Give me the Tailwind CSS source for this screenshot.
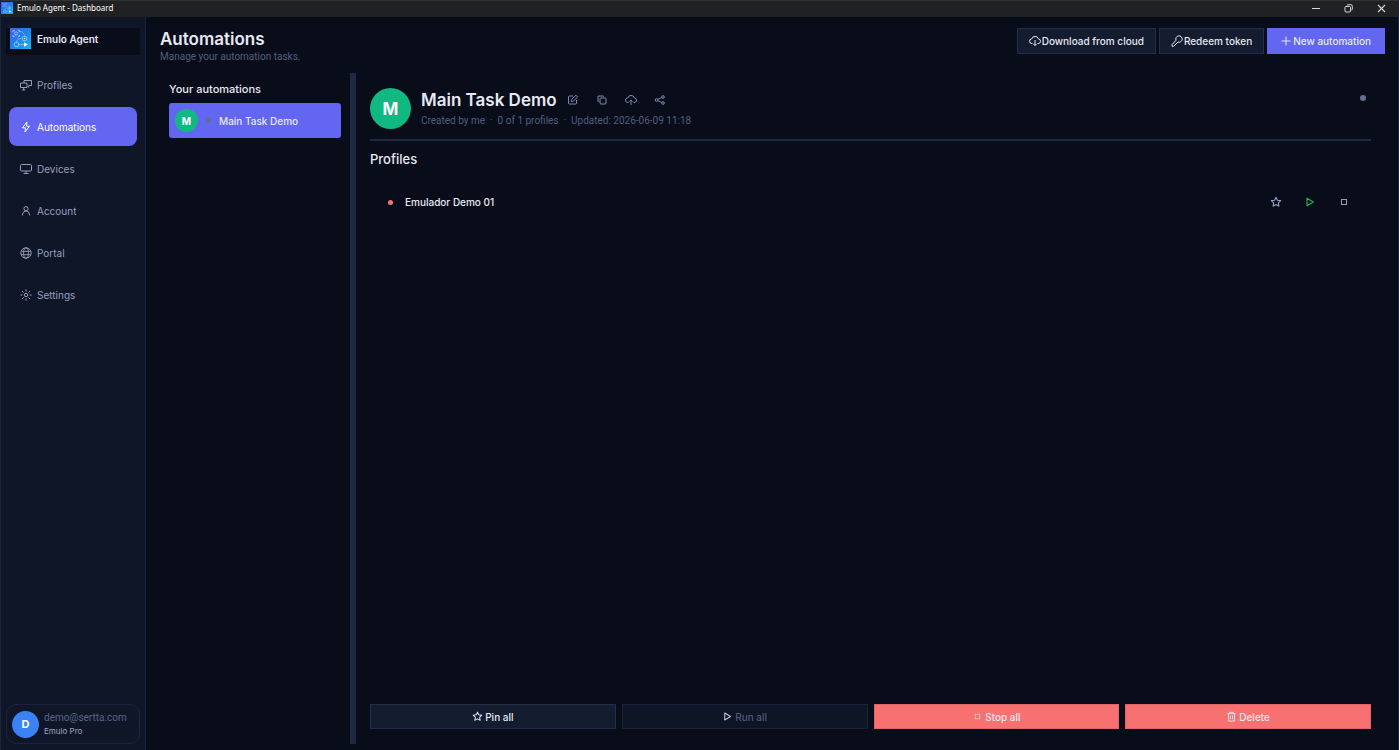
<!DOCTYPE html>
<html lang="en">
<head>
  <meta charset="UTF-8">
  <meta name="viewport" content="width=device-width, initial-scale=1.0">
  <title>Emulo Agent - Dashboard</title>
  <script src="https://cdn.jsdelivr.net/npm/@tailwindcss/browser@4"></script>
</head>
<body class="bg-[#090d1a] text-[#e6e9f2] font-['Inter',sans-serif] text-[10px] leading-4">
  <!-- shared icons -->
  <svg class="absolute size-0" aria-hidden="true">
    <defs>
      <linearGradient id="logoFill" x1="0" y1="0" x2="1" y2="1">
        <stop offset="0" stop-color="#4a5cf0" />
        <stop offset="0.5" stop-color="#2183ea" />
        <stop offset="1" stop-color="#0cc0ee" />
      </linearGradient>
    </defs>
    <symbol id="logo" viewBox="0 0 21 21">
      <rect width="21" height="21" fill="url(#logoFill)" />
      <g fill="none" stroke="#a5d2ff" stroke-width="0.8">
        <path d="M3 4V2.500h1.500M8 2.500h1.500V4M9.500 7v1.500H8M4.500 8.500H3V7" />
        <circle cx="6.200" cy="5.500" r="1.600" />
        <rect x="12.500" y="8.500" width="4" height="4" rx="1" />
        <rect x="4.500" y="14.500" width="4" height="4" rx="1" />
        <path d="M9.500 3.500q4 0 5 4M6.500 13.500q1-3 5.500-3M9 16.500h5" stroke-dasharray="1.500 0.600" />
      </g>
      <circle cx="14.500" cy="10.500" r="0.700" fill="#fff" />
      <path d="M14 14.300l4 2.200-4 2.200z" fill="#fff" />
    </symbol>
    <symbol id="star" viewBox="0 0 12 12"><path d="M6 1.200l1.400 3 3.300.4-2.400 2.300.6 3.300L6 8.600l-2.900 1.600.6-3.300L1.300 4.600l3.300-.4z" fill="none" stroke="currentColor" stroke-width="1.100" stroke-linejoin="round" /></symbol>
    <symbol id="play" viewBox="0 0 12 12"><path d="M3 2.200v7.600L9.300 6z" fill="none" stroke="currentColor" stroke-width="1.100" stroke-linejoin="round" /></symbol>
    <symbol id="stop" viewBox="0 0 12 12"><rect x="3.500" y="3.500" width="5" height="5" fill="none" stroke="currentColor" /></symbol>
  </svg>

  <div class="flex flex-col min-h-screen border-x border-[#1c2438]">
    <header class="flex items-center justify-between h-[17px] pb-[2px] bg-[#1f2122] border-t border-[#303334] font-['Noto_Sans',sans-serif] text-[8px] text-white">
      <div class="flex items-center gap-1">
        <svg class="size-3"><use href="#logo" /></svg>
        <span>Emulo Agent - Dashboard</span>
      </div>
      <div class="flex items-center gap-[22px] pr-[11px] text-[#d8d8d8]">
        <button aria-label="Minimize"><svg class="size-[11px]" viewBox="0 0 11 11"><path d="M2 5.500h8" stroke="currentColor" /></svg></button>
        <button aria-label="Restore"><svg class="size-[11px]" viewBox="0 0 11 11" fill="none" stroke="currentColor"><rect x="2" y="3.500" width="5.500" height="5.500" rx="1" /><path d="M4 2.500q0-.8.800-.8h3q1.500 0 1.500 1.500v3q0 .8-.800.8" /></svg></button>
        <button aria-label="Close"><svg class="size-[11px]" viewBox="0 0 11 11"><path d="M2 2l7 7M9 2l-7 7" stroke="currentColor" stroke-width="1.100" /></svg></button>
      </div>
    </header>

    <div class="flex flex-1">
      <aside class="flex flex-col w-[145px] shrink-0 px-[5px] pt-[11px] pb-[6px] bg-[#0f1627] border-r border-[#192238]">
        <div class="flex items-start gap-[6px] h-[27px] pl-1 bg-[#090d1a] font-semibold">
          <svg class="size-[21px]"><use href="#logo" /></svg>
          <span class="leading-[22px]">Emulo Agent</span>
        </div>

        <nav class="flex flex-col gap-[3px] mt-[10px] px-[3px] text-[#94a0be]">
          <a href="#profiles" class="flex items-center gap-[5px] h-[39px] px-[11px] rounded-lg">
            <svg class="size-3" viewBox="0 0 12 12" fill="none" stroke="currentColor"><path d="M4 4V1.500h7.500v5H9M.500 4h6.500v4.500H.500zM3.700 8.500v2.500M2.200 11h3M8.700 6.500v2" /></svg>
            Profiles
          </a>
          <a href="#automations" class="flex items-center gap-[5px] h-[39px] px-[11px] rounded-lg bg-[#6366f1] text-white">
            <svg class="size-3" viewBox="0 0 12 12" fill="none" stroke="currentColor" stroke-linejoin="round"><path d="M7 1L2.500 6.800h3L5 11l4.500-5.800h-3z" /></svg>
            Automations
          </a>
          <a href="#devices" class="flex items-center gap-[5px] h-[39px] px-[11px] rounded-lg">
            <svg class="size-3" viewBox="0 0 12 12" fill="none" stroke="currentColor"><rect x=".5" y="1.500" width="11" height="6.500" rx="1" /><path d="M6 8v2.500M3.500 10.500h5" /></svg>
            Devices
          </a>
          <a href="#account" class="flex items-center gap-[5px] h-[39px] px-[11px] rounded-lg">
            <svg class="size-3" viewBox="0 0 12 12" fill="none" stroke="currentColor"><circle cx="6" cy="3.700" r="2.100" /><path d="M2.200 10.500q.3-4.300 3.800-4.600 3.500.3 3.800 4.600" /></svg>
            Account
          </a>
          <a href="#portal" class="flex items-center gap-[5px] h-[39px] px-[11px] rounded-lg">
            <svg class="size-3" viewBox="0 0 12 12" fill="none" stroke="currentColor" stroke-width=".9"><circle cx="6" cy="6" r="5.200" /><ellipse cx="6" cy="6" rx="2.400" ry="5.200" /><path d="M1.200 4.300h9.600M1.200 7.700h9.600" /></svg>
            Portal
          </a>
          <a href="#settings" class="flex items-center gap-[5px] h-[39px] px-[11px] rounded-lg">
            <svg class="size-3" viewBox="0 0 12 12" fill="none" stroke="currentColor"><circle cx="6" cy="6" r="1.700" /><path d="M6 .5v2M6 9.500v2M.500 6h2M9.500 6h2M2.100 2.100l1.400 1.400M8.500 8.500l1.400 1.400M9.900 2.100L8.500 3.500M3.500 8.500L2.100 9.900" /></svg>
            Settings
          </a>
        </nav>

        <div class="flex items-center gap-[5px] h-10 mt-auto pl-[5px] border border-[#1a243a] rounded-[10px]">
          <div class="flex items-center justify-center size-[27px] rounded-full bg-[#3b82f6] text-white text-[11px] font-bold">D</div>
          <div class="flex flex-col">
            <span class="font-['Roboto',sans-serif] leading-[14px] text-[#59658a]">demo@sertta.com</span>
            <span class="text-[8px] leading-[13px] text-[#9ba6c2]">Emulo Pro</span>
          </div>
        </div>
      </aside>

      <main class="flex flex-col flex-1 min-w-0 pt-[11px] pl-[14px] pr-[13px] pb-[6px]">
        <div class="flex justify-between">
          <div>
            <h1 class="text-[17px] leading-[22px] font-semibold">Automations</h1>
            <p class="-mt-px font-['Roboto',sans-serif] text-[#535d7e]">Manage your automation tasks.</p>
          </div>
          <div class="flex items-start gap-[3px] font-medium">
            <button class="flex items-center gap-px h-[26px] px-[11px] bg-[#141c2f] border border-[#232e4c]">
              <svg class="size-3" viewBox="0 0 12 12" fill="none" stroke="currentColor"><path d="M3.500 8.500H3a2.300 2.300 0 0 1-.3-4.600 3.500 3.500 0 0 1 6.700 0A2.300 2.300 0 0 1 9 8.500h-.5M6 5v5.500M4.300 8.900L6 10.600l1.700-1.700" /></svg>
              Download from cloud
            </button>
            <button class="flex items-center gap-px h-[26px] px-[11px] bg-[#141c2f] border border-[#232e4c]">
              <svg class="size-3" viewBox="0 0 12 12" fill="none" stroke="currentColor"><path d="M5 5.200a3.200 3.200 0 1 1 2 1.900L2.500 11.300H1V9.700z" /></svg>
              Redeem token
            </button>
            <button class="flex items-center gap-[2px] h-[26px] px-[14px] bg-[#6366f1]">
              <svg class="size-[10px]" viewBox="0 0 10 10" stroke="currentColor"><path d="M5 .5v9M.500 5h9" /></svg>
              New automation
            </button>
          </div>
        </div>

        <div class="flex flex-1 mt-2">
          <section class="w-[190px] shrink-0 pt-2 px-[9px]">
            <h2 class="text-[11px] font-medium">Your automations</h2>
            <button class="flex items-center w-full h-[35px] mt-[6px] pl-[6px] rounded-[3px] bg-[#6366f1] font-medium">
              <span class="flex items-center justify-center size-[23px] rounded-full bg-[#10b981] text-white text-[10px] font-bold">M</span>
              <span class="size-[5px] mx-2 rounded-full bg-[#64708b]"></span>
              Main Task Demo
            </button>
          </section>
          <div class="w-[6px] shrink-0 bg-[#1f2944]"></div>

          <section class="flex flex-col flex-1 min-w-0 pt-[15px] pl-[14px] pr-[14px] pb-[15px]">
            <div class="flex gap-[10px] h-[53px] border-b-2 border-[#1f2944]">
              <div class="flex items-center justify-center size-[41px] rounded-full bg-[#10b981] text-white text-[17px] font-bold">M</div>
              <div class="flex-1">
                <div class="flex items-center h-[23px] text-[#7f8ab0]">
                  <h2 class="mr-[10px] text-[17px] font-semibold text-[#e6e9f2]">Main Task Demo</h2>
                  <div class="flex gap-[17px]">
                    <button aria-label="Edit"><svg class="size-3" viewBox="0 0 12 12" fill="none" stroke="currentColor"><path d="M6 2H2.500q-1 0-1 1v6q0 1 1 1h6q1 0 1-1V6M4.200 7.500l.4-2L9 1.200l1.700 1.700-4.500 4.300z" /></svg></button>
                    <button aria-label="Copy"><svg class="size-3" viewBox="0 0 12 12" fill="none" stroke="currentColor"><rect x="4" y="4" width="6" height="6" rx="1" /><path d="M2.700 7.500H2V2h5.500v.700" /></svg></button>
                    <button aria-label="Upload to cloud"><svg class="size-3" viewBox="0 0 12 12" fill="none" stroke="currentColor"><path d="M3.500 8.500H3a2.300 2.300 0 0 1-.3-4.600 3.500 3.500 0 0 1 6.700 0A2.300 2.300 0 0 1 9 8.500h-.5M6 11V6M4.300 7.600L6 5.900l1.700 1.700" /></svg></button>
                    <button aria-label="Share"><svg class="size-3" viewBox="0 0 12 12" fill="none" stroke="currentColor"><circle cx="2.500" cy="6" r="1.300" /><circle cx="9" cy="3" r="1.300" /><circle cx="9" cy="9" r="1.300" /><path d="M3.700 5.400l4.100-1.800M3.700 6.600l4.100 1.800" /></svg></button>
                  </div>
                </div>
                <p class="mt-[2px] font-['Roboto',sans-serif] text-[#535d7e]">Created by me &nbsp;·&nbsp; 0 of 1 profiles &nbsp;·&nbsp; Updated: 2026-06-09 11:18</p>
              </div>
              <span class="size-[6px] mt-[7px] mr-[5px] rounded-full bg-[#64708f]"></span>
            </div>

            <h3 class="mt-[10px] text-[13px] font-medium">Profiles</h3>
            <div class="flex items-center h-10 mt-[15px] pl-[18px] pr-[21px] font-medium">
              <span class="size-[5px] rounded-full bg-[#f87171]"></span>
              <span class="ml-[12px]">Emulador Demo 01</span>
              <div class="flex gap-[22px] ml-auto text-[#94a0be]">
                <button aria-label="Pin"><svg class="size-3"><use href="#star" /></svg></button>
                <button aria-label="Run" class="text-[#22b455]"><svg class="size-3"><use href="#play" /></svg></button>
                <button aria-label="Stop"><svg class="size-3"><use href="#stop" /></svg></button>
              </div>
            </div>

            <div class="grid grid-cols-4 gap-[6px] mt-auto font-medium">
              <button class="flex items-center justify-center gap-[2px] h-[25px] bg-[#141c2f] border border-[#232e4c]">
                <svg class="size-[11px]"><use href="#star" /></svg>
                Pin all
              </button>
              <button disabled class="flex items-center justify-center gap-[2px] h-[25px] bg-[#0e1525] border border-[#192239] text-[#4f5979]">
                <svg class="size-[11px] text-[#c3c9d8]"><use href="#play" /></svg>
                Run all
              </button>
              <button class="flex items-center justify-center gap-[2px] h-[25px] bg-[#f87171] border border-[#e06568]">
                <svg class="size-[11px] text-[#dcc0cc]"><use href="#stop" /></svg>
                Stop all
              </button>
              <button class="flex items-center justify-center gap-[2px] h-[25px] bg-[#f87171] border border-[#e06568]">
                <svg class="size-[11px]" viewBox="0 0 12 12" fill="none" stroke="currentColor"><path d="M1.500 3h9M4 3V1.500h4V3M2.500 3l.5 8h6l.5-8M4.800 5v4M7.200 5v4" /></svg>
                Delete
              </button>
            </div>
          </section>
        </div>
      </main>
    </div>
  </div>
</body>
</html>
